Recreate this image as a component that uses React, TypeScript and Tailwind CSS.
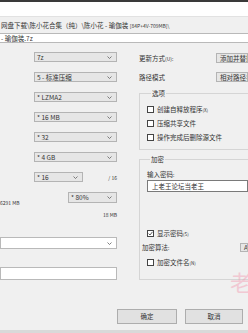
import React from "react";

function Chevron() {
  return (
    <svg width="5" height="3" viewBox="0 0 5 3" className="shrink-0">
      <path d="M0.5 0.5 L2.5 2.5 L4.5 0.5" fill="none" stroke="#606060" strokeWidth="0.8" />
    </svg>
  );
}

function Combo({ text, className = "", white = false }: { text: string; className?: string; white?: boolean }) {
  return (
    <div
      className={`flex items-center justify-between overflow-hidden border pl-[2px] pr-[4px] ${
        white ? "border-[#b9b9b9] bg-white" : "border-[#b4b4b4] bg-[#e6e6e6]"
      } ${className}`}
    >
      <span className="whitespace-nowrap">{text}</span>
      <Chevron />
    </div>
  );
}

function Box({ text, className = "" }: { text: string; className?: string }) {
  return (
    <div className={`flex items-center overflow-hidden whitespace-nowrap border border-[#b4b4b4] bg-[#e6e6e6] pl-[3px] ${className}`}>
      {text}
    </div>
  );
}

function Check({ label, keyHint, checked = false, className = "" }: { label: string; keyHint: string; checked?: boolean; className?: string }) {
  return (
    <div className={`flex items-center ${className}`}>
      <div className="flex h-[7px] w-[7px] items-center justify-center border border-[#444] bg-white">
        {checked && (
          <svg width="5" height="5" viewBox="0 0 5 5">
            <path d="M0.6 2.6 L2 4 L4.5 0.8" fill="none" stroke="#333" strokeWidth="0.8" />
          </svg>
        )}
      </div>
      <span className="ml-[3px] whitespace-nowrap">
        {label}
        <span className="text-[4.5px]">{keyHint}</span>
      </span>
    </div>
  );
}

export default function App() {
  return (
    <div className="relative flex h-[333px] w-[248px] flex-col overflow-hidden bg-[#f0f0f0] font-['Noto_Sans_CJK_SC',sans-serif] text-[6.5px] leading-none text-[#333]">
      {/* window frame + title */}
      <div className="h-[2px] shrink-0 bg-[#3a3a3a]" />
      <div className="h-[15px] shrink-0 border-b border-[#e2e2e2] bg-white" />

      {/* archive path */}
      <div className="mt-[5px] h-[7px] whitespace-nowrap pl-[1px]">
        网盘下载\陈小花合集（纯）\陈小花 - 瑜伽装 <span className="text-[5px]">[84P+4V-709MB]\</span>
      </div>
      <div className="mt-[4px] flex h-[10px] shrink-0 items-center border-y border-[#b9b9b9] bg-white pl-[1px]">
        - 瑜伽装.7z
      </div>

      <div className="mt-[9px] flex h-[257px] shrink-0">
        {/* left column */}
        <div className="flex w-[117px] shrink-0 flex-col">
          <Combo text="7z" className="ml-[34px] h-[10px]" />
          <Combo text="5 - 标准压缩" className="ml-[34px] mt-[10px] h-[10px]" />
          <Combo text="* LZMA2" className="ml-[34px] mt-[10px] h-[10px]" />
          <Combo text="* 16 MB" className="ml-[34px] mt-[10px] h-[10px]" />
          <Combo text="* 32" className="ml-[34px] mt-[10px] h-[10px]" />
          <Combo text="* 4 GB" className="ml-[34px] mt-[10px] h-[10px]" />
          <div className="mt-[10px] flex h-[10px] items-center">
            <Combo text="* 16" className="ml-[34px] h-[10px] w-[49px]" />
            <span className="ml-auto text-[5px]">/ 16</span>
          </div>
          <div className="mt-[10px] flex h-[11px] items-end">
            <span className="mb-[-2px] text-[5px]">6291 MB</span>
            <Combo text="* 80%" className="ml-auto h-[11px] w-[49px]" />
          </div>
          <div className="mt-[9px] text-right text-[5px]">18 MB</div>
          <Combo text="" white className="mt-[20px] h-[12px]" />
          <div className="mt-[18px] h-[13px] border border-[#b9b9b9] bg-white" />
        </div>

        {/* right column */}
        <div className="ml-[22px] flex min-w-0 flex-1 flex-col">
          <div className="mt-[1px] flex h-[10px] items-center">
            <span className="whitespace-nowrap">
              更新方式<span className="text-[5px]">(U):</span>
            </span>
            <Box text="添加并替换文件" className="ml-auto h-[10px] w-[32px] shrink-0" />
          </div>
          <div className="mt-[9px] flex h-[10px] items-center">
            <span>路径模式</span>
            <Box text="相对路径名" className="ml-auto h-[10px] w-[32px] shrink-0" />
          </div>

          <fieldset className="mt-[8px] h-[60px] border-y border-l border-[#d5d5d5] pl-[7px]">
            <legend className="ml-[4px] px-[1px]">选项</legend>
            <Check label="创建自释放程序" keyHint="(X)" className="mt-[9px]" />
            <Check label="压缩共享文件" keyHint="" className="mt-[7px]" />
            <Check label="操作完成后删除源文件" keyHint="" className="mt-[7px]" />
          </fieldset>

          <fieldset className="mt-[6px] h-[124px] border-y border-l border-[#d5d5d5] pl-[7px]">
            <legend className="ml-[3px] px-[1px]">加密</legend>
            <div className="mt-[8px]">
              输入密码<span className="text-[5px]">:</span>
            </div>
            <div className="mt-[3px] flex h-[12px] items-center whitespace-nowrap border border-[#7a7a7a] bg-white pl-[4px]">
              上老王论坛当老王
            </div>
            <Check label="显示密码" keyHint="(S)" checked className="mt-[38px]" />
            <div className="ml-[-5px] mt-[6px] flex h-[9px] items-center">
              <span>
                加密算法<span className="text-[5px]">:</span>
              </span>
              <Box text="AES" className="ml-auto h-[9px] w-[8px] shrink-0" />
            </div>
            <Check label="加密文件名" keyHint="(N)" className="mt-[7px]" />
          </fieldset>
        </div>
      </div>

      {/* buttons */}
      <div className="flex h-[15px] shrink-0">
        <button className="ml-[117px] h-[15px] w-[60px] border border-[#adadad] bg-[#e1e1e1] text-[6.5px]">确定</button>
        <button className="ml-[8px] h-[15px] w-[58px] border border-[#adadad] bg-[#e1e1e1] text-[6.5px]">取消</button>
      </div>
      <div className="mt-auto h-[3px] shrink-0 bg-[#d9d9d9]" />

      {/* watermark */}
      <div className="pointer-events-none absolute left-[230px] top-[270px] text-[22px] leading-none text-[#f2a3b8] opacity-50">
        老
      </div>
    </div>
  );
}
